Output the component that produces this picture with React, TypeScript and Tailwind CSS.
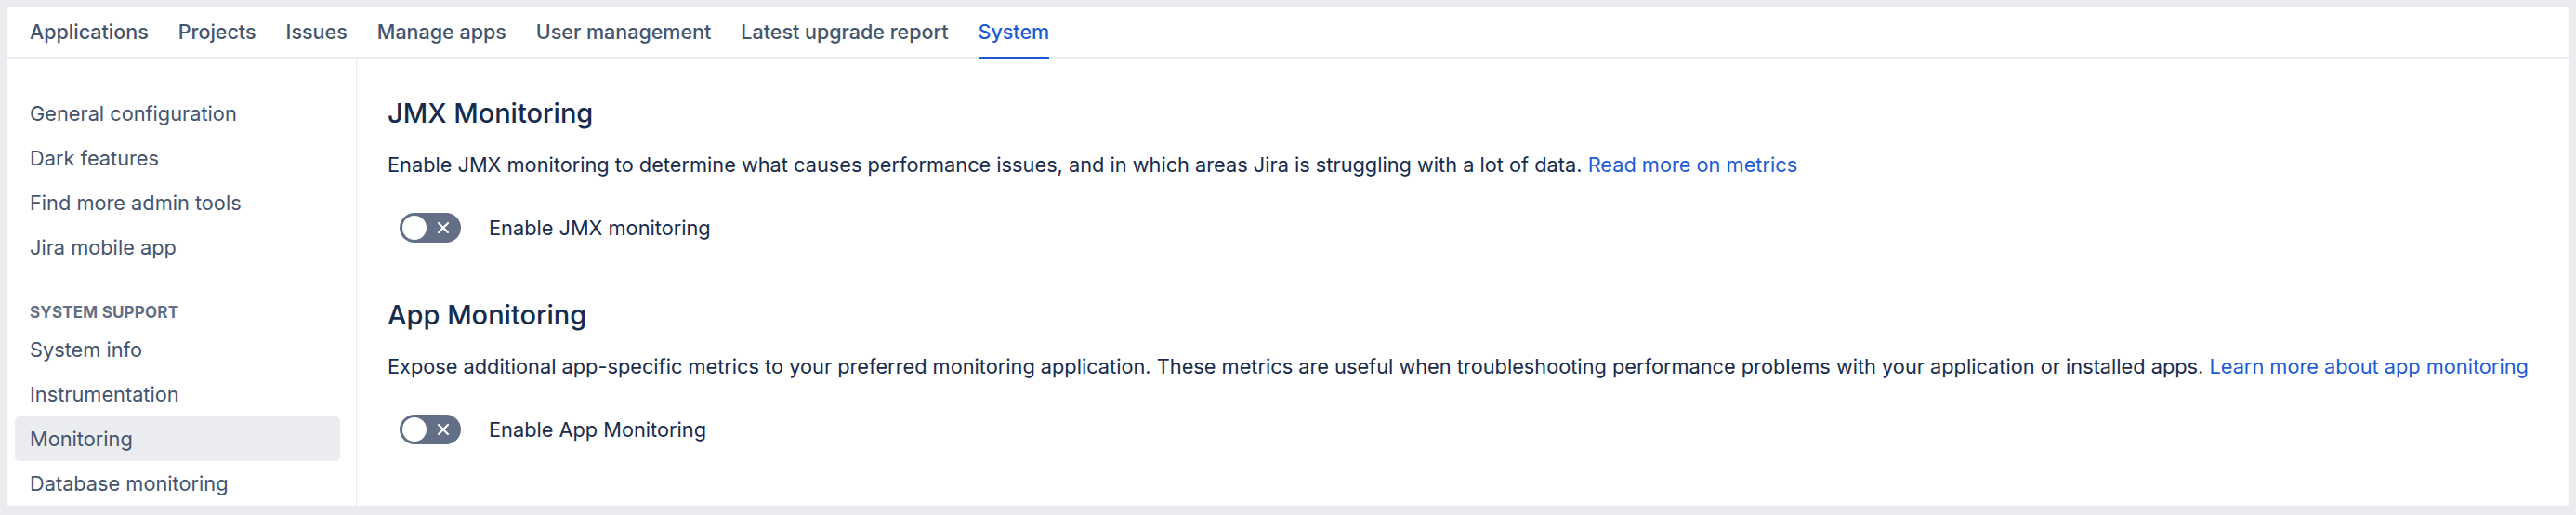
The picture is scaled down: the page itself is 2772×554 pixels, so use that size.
import React from "react";

const tabs = [
  "Applications",
  "Projects",
  "Issues",
  "Manage apps",
  "User management",
  "Latest upgrade report",
  "System",
];

const topLinks = [
  "General configuration",
  "Dark features",
  "Find more admin tools",
  "Jira mobile app",
];

const supportLinks = [
  "System info",
  "Instrumentation",
  "Monitoring",
  "Database monitoring",
];

const Toggle = () => (
  <div className="ml-[13px] flex h-[32px] w-[66px] shrink-0 items-center rounded-full bg-[#626f86]">
    <div className="ml-[3px] h-[26px] w-[26px] rounded-full bg-white" />
    <svg
      className="ml-[10px] h-[16px] w-[16px]"
      viewBox="0 0 16 16"
      fill="none"
      stroke="white"
      strokeWidth="2.2"
      strokeLinecap="round"
    >
      <path d="M3 3l10 10M13 3L3 13" />
    </svg>
  </div>
);

const Section = ({
  title,
  text,
  link,
  label,
}: {
  title: string;
  text: string;
  link: string;
  label: string;
}) => (
  <section>
    <h2 className="text-[29px] leading-[36px] font-medium text-[#172b4d]">{title}</h2>
    <p className="mt-[25px] text-[21.75px] leading-[24px] text-[#172b4d]">
      {text} <a className="text-[#1d5bd6]">{link}</a>
    </p>
    <div className="mt-[40px] flex items-center gap-[30px]">
      <Toggle />
      <span className="text-[21.75px] leading-[24px] text-[#172b4d]">{label}</span>
    </div>
  </section>
);

export default function App() {
  return (
    <div
      className="min-h-screen bg-[#ebecf0] px-[7px] pt-[7px] pb-[8px]"
      style={{ fontFamily: "Inter, 'Noto Sans', sans-serif" }}
    >
      <div className="overflow-hidden rounded-[3px] bg-white">
        <nav className="flex gap-[32px] border-b-[3px] border-[#ebecf0] pl-[25px]">
          {tabs.map((t) => (
            <div
              key={t}
              className={`-mb-[3px] flex h-[57px] items-center border-b-[3px] text-[21.5px] font-medium ${
                t === "System"
                  ? "border-[#1d5bd6] text-[#1d5bd6]"
                  : "border-transparent text-[#44546f]"
              }`}
            >
              {t}
            </div>
          ))}
        </nav>

        <div className="flex">
          <aside className="w-[377px] shrink-0 border-r border-[#ebecf0] pt-[34px] pr-[17px] pl-[9px]">
            {topLinks.map((l) => (
              <div key={l} className="flex h-[48px] items-center px-[16px] text-[21.75px] text-[#44546f]">
                {l}
              </div>
            ))}
            <div className="px-[16px] pt-[34px] pb-[4px] text-[17px] leading-[24px] font-bold tracking-[0.2px] text-[#626f86]">
              SYSTEM SUPPORT
            </div>
            {supportLinks.map((l) => (
              <div
                key={l}
                className={`flex h-[48px] items-center rounded-[5px] px-[16px] text-[21.75px] text-[#44546f] ${
                  l === "Monitoring" ? "bg-[#ebecf0]" : ""
                }`}
              >
                {l}
              </div>
            ))}
          </aside>

          <main className="flex flex-col gap-[60px] pt-[40px] pl-[33px]">
            <Section
              title="JMX Monitoring"
              text="Enable JMX monitoring to determine what causes performance issues, and in which areas Jira is struggling with a lot of data."
              link="Read more on metrics"
              label="Enable JMX monitoring"
            />
            <Section
              title="App Monitoring"
              text="Expose additional app-specific metrics to your preferred monitoring application. These metrics are useful when troubleshooting performance problems with your application or installed apps."
              link="Learn more about app monitoring"
              label="Enable App Monitoring"
            />
          </main>
        </div>
      </div>
    </div>
  );
}
